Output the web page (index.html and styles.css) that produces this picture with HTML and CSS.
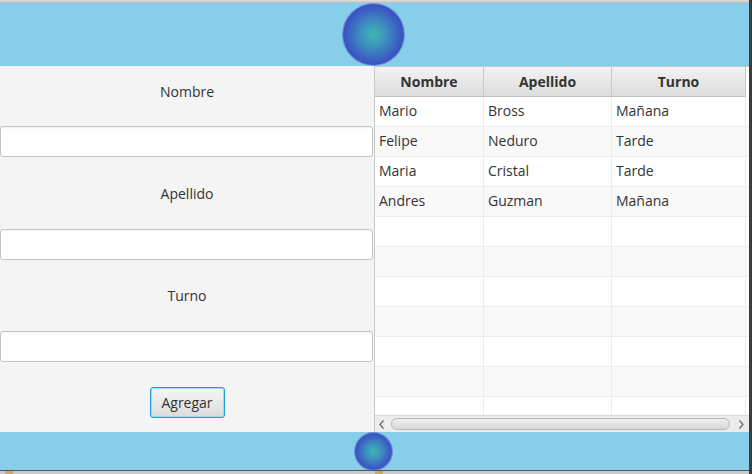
FILE: index.html
```html
<!DOCTYPE html>
<html>
<head>
<meta charset="utf-8">
<link rel="stylesheet" href="styles.css">
</head>
<body>
<div class="screen">
  <div class="window">
    <div class="topline"></div>
    <header class="header"><div class="orb orb-big"></div></header>
    <main class="middle">
      <section class="form">
        <div class="label l1">Nombre</div>
        <div class="field f1"></div>
        <div class="label l2">Apellido</div>
        <div class="field f2"></div>
        <div class="label l3">Turno</div>
        <div class="field f3"></div>
        <div class="btnrow"><button class="btn">Agregar</button></div>
      </section>
      <section class="table">
        <div class="thead">
          <div class="th c1">Nombre</div>
          <div class="th c2">Apellido</div>
          <div class="th c3">Turno</div>
          <div class="th c4"></div>
        </div>
        <div class="tbody">
          <div class="row"><div class="td c1">Mario</div><div class="td c2">Bross</div><div class="td c3">Mañana</div><div class="td c4"></div></div>
          <div class="row odd"><div class="td c1">Felipe</div><div class="td c2">Neduro</div><div class="td c3">Tarde</div><div class="td c4"></div></div>
          <div class="row"><div class="td c1">Maria</div><div class="td c2">Cristal</div><div class="td c3">Tarde</div><div class="td c4"></div></div>
          <div class="row odd"><div class="td c1">Andres</div><div class="td c2">Guzman</div><div class="td c3">Mañana</div><div class="td c4"></div></div>
          <div class="row"><div class="td c1"></div><div class="td c2"></div><div class="td c3"></div><div class="td c4"></div></div>
          <div class="row odd"><div class="td c1"></div><div class="td c2"></div><div class="td c3"></div><div class="td c4"></div></div>
          <div class="row"><div class="td c1"></div><div class="td c2"></div><div class="td c3"></div><div class="td c4"></div></div>
          <div class="row odd"><div class="td c1"></div><div class="td c2"></div><div class="td c3"></div><div class="td c4"></div></div>
          <div class="row"><div class="td c1"></div><div class="td c2"></div><div class="td c3"></div><div class="td c4"></div></div>
          <div class="row odd"><div class="td c1"></div><div class="td c2"></div><div class="td c3"></div><div class="td c4"></div></div>
          <div class="row"><div class="td c1"></div><div class="td c2"></div><div class="td c3"></div><div class="td c4"></div></div>
        </div>
        <div class="hscroll">
          <svg class="arrow" width="10" height="17" viewBox="0 0 10 17"><path d="M6.5 4.5 L3 8.5 L6.5 12.5" fill="none" stroke="#6b6b6b" stroke-width="1.3"/></svg>
          <div class="thumb"></div>
          <svg class="arrow" width="10" height="17" viewBox="0 0 10 17"><path d="M3.5 4.5 L7 8.5 L3.5 12.5" fill="none" stroke="#6b6b6b" stroke-width="1.3"/></svg>
        </div>
      </section>
    </main>
    <footer class="footer"><div class="orb orb-small"></div></footer>
    <div class="bottom"><span class="tan t1"></span><span class="tan t2"></span></div>
  </div>
  <div class="edge"></div>
</div>
</body>
</html>
```
FILE: styles.css
```css
html, body {
  margin: 0;
  padding: 0;
  width: 752px;
  height: 474px;
  overflow: hidden;
  background: #c8c8c8;
  font-family: "Open Sans", "Noto Sans", sans-serif;
  font-size: 14px;
  color: #333;
}
.screen {
  display: flex;
  width: 752px;
  height: 474px;
}
.window {
  width: 749px;
  display: flex;
  flex-direction: column;
}
.edge {
  width: 3px;
  background: #3b3b3b;
}
.topline {
  height: 3px;
  background: linear-gradient(#e0e0e0, #bdbdbd);
}
.header {
  height: 63px;
  background: #87ceea;
  display: flex;
  align-items: center;
  justify-content: center;
}
.orb {
  border-radius: 50%;
  background: radial-gradient(circle at 50% 50%, #3eb9ad 0%, #3d8fbf 30%, #3b5bc3 62%, #3a36be 90%, #5a5ac8 100%);
  box-shadow: 0 0 0 1px rgba(90, 90, 200, 0.55);
}
.orb-big {
  width: 61px;
  height: 61px;
  margin-left: -3px;
}
.orb-small {
  width: 37px;
  height: 37px;
  margin-left: -3px;
}
.middle {
  height: 366px;
  display: flex;
}
.form {
  width: 374px;
  flex: none;
  background: #f4f4f4;
  border-right: 1px solid #c8c8c8;
  display: flex;
  flex-direction: column;
  align-items: center;
}
.label {
  height: 20px;
  line-height: 20px;
  text-align: center;
  color: #333;
}
.l1 { margin-top: 16px; }
.l2 { margin-top: 27px; }
.l3 { margin-top: 26px; }
.field {
  width: 371px;
  height: 29px;
  align-self: flex-start;
  background: linear-gradient(#f7f7f7 0, #ffffff 3px);
  border: 1px solid #c4c4c4;
  border-radius: 3px;
}
.f1 { margin-top: 24px; }
.f2 { margin-top: 25px; }
.f3 { margin-top: 25px; }
.btnrow {
  margin-top: 25px;
  width: 100%;
  display: flex;
  justify-content: center;
}
.btn {
  width: 75px;
  height: 31px;
  font-family: inherit;
  font-size: 14px;
  color: #333;
  border: 1px solid #1aa3de;
  border-radius: 3px;
  box-shadow: inset 0 0 0 1px #9fd8f2;
  background: linear-gradient(#f6f6f6, #dcdcdc);
  padding: 0;
}
.table {
  flex: 1;
  background: #ffffff;
  display: flex;
  flex-direction: column;
}
.thead {
  height: 30px;
  display: flex;
  border-top: 1px solid #c8c8c8;
  background: linear-gradient(#f2f2f2, #dcdcdc);
  flex: none;
}
.th {
  font-weight: bold;
  text-align: center;
  line-height: 30px;
  border-right: 1px solid #c8c8c8;
  border-bottom: 1px solid #c0c0c0;
  box-sizing: border-box;
  height: 30px;
  color: #333;
}
.th.c4 { border-right: none; border-bottom: none; background: #fff; }
.c1 { width: 109px; flex: none; }
.c2 { width: 128px; flex: none; }
.c3 { width: 134px; flex: none; }
.c4 { flex: 1; }
.tbody {
  flex: 1;
  overflow: hidden;
}
.row {
  display: flex;
  height: 30px;
  border-bottom: 1px solid #ececec;
  box-sizing: border-box;
  background: #ffffff;
}
.row.odd { background: #f9f9f9; }
.td {
  box-sizing: border-box;
  padding-left: 4px;
  line-height: 28px;
  border-right: 1px solid #ececec;
  color: #333;
}
.td.c4 { border-right: none; }
.hscroll {
  height: 17px;
  flex: none;
  background: #ececec;
  border-top: 1px solid #d8d8d8;
  box-sizing: border-box;
  display: flex;
  align-items: center;
  padding-right: 2px;
}
.arrow {
  flex: none;
  margin: 0 2px;
}
.thumb {
  flex: 1;
  height: 12px;
  border: 1px solid #b8b8b8;
  border-radius: 6px;
  box-sizing: border-box;
  background: linear-gradient(#f0f0f0, #d8d8d8);
  margin: 0 4px 0 2px;
}
.footer {
  height: 38px;
  background: #87ceea;
  display: flex;
  align-items: center;
  justify-content: center;
  border-bottom: 1px solid #555;
}
.bottom {
  flex: 1;
  background: #cacaca;
  display: flex;
}
.tan {
  height: 3px;
  align-self: flex-end;
  background: #c9a868;
  width: 8px;
}
.t1 { margin-left: 5px; }
.t2 { margin-left: 362px; }
```
